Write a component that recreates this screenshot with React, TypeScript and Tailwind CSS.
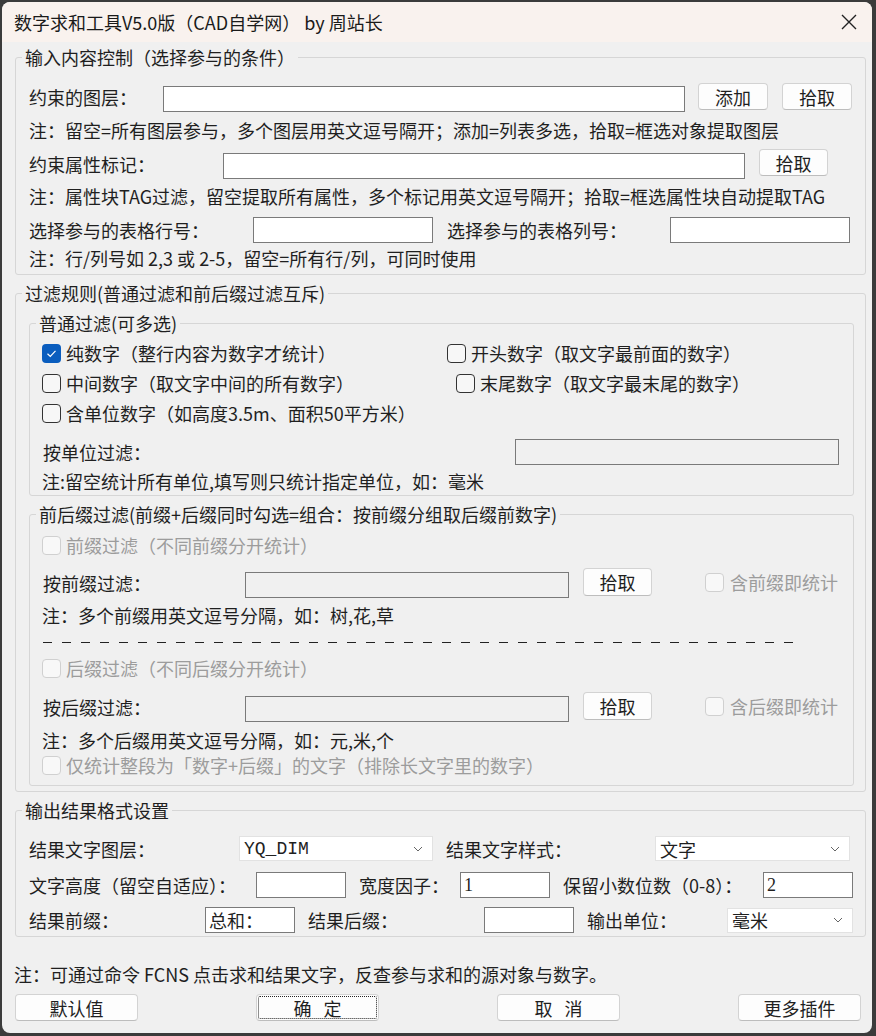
import type { ReactNode } from "react";

const dis = "text-[#9c9c9c]";

function Btn({ children, className = "" }: { children: ReactNode; className?: string }) {
  return (
    <div className={`flex h-[27px] items-center justify-center rounded-[4px] border border-[#d3d3d3] border-b-[#bdbdbd] bg-[#fdfdfd] text-[18px] leading-none text-[#1f1f1f] ${className}`}>
      {children}
    </div>
  );
}

function Box({ className = "", children }: { className?: string; children?: ReactNode }) {
  return <div className={`flex h-[26px] items-center border border-[#7a7a7a] pl-[3px] text-[18px] leading-none ${className}`}>{children}</div>;
}

function Combo({ className = "", children }: { className?: string; children?: ReactNode }) {
  return (
    <div className={`flex h-[25px] items-center justify-between border border-[#e2e2e2] bg-white pl-[4px] pr-[9px] text-[18px] leading-none ${className}`}>
      <span>{children}</span>
      <svg width="10" height="6" viewBox="0 0 10 6" fill="none">
        <path d="M1 1l4 4 4-4" stroke="#666" strokeWidth="1" />
      </svg>
    </div>
  );
}

function Cb({ checked = false, disabled = false }: { checked?: boolean; disabled?: boolean }) {
  if (checked)
    return (
      <div className="flex h-[19px] w-[19px] shrink-0 items-center justify-center rounded-[4px] bg-[#0a5dbe]">
        <svg width="19" height="19" viewBox="0 0 19 19" fill="none">
          <path d="M5.5 9.8l2.8 2.7 5.2-5.7" stroke="#fff" strokeWidth="1.2" />
        </svg>
      </div>
    );
  return (
    <div className={`h-[19px] w-[19px] shrink-0 rounded-[4px] border ${disabled ? "border-[#d0d0d0] bg-[#f8f8f8]" : "border-[#333] bg-[#f7f7f7]"}`} />
  );
}

// group box: border line runs through the legend, content padded inside
function Group({ title, className = "", inner = "", children }: { title: string; className?: string; inner?: string; children: ReactNode }) {
  return (
    <fieldset className={`rounded-[3px] border border-[#d6d6d6] ${className}`}>
      <legend className="ml-[6px] px-[3px] text-[18px] leading-[22px]">{title}</legend>
      <div className={inner}>{children}</div>
    </fieldset>
  );
}

function Dashes() {
  return (
    <div className="flex h-[22px] items-center gap-[10px]">
      {Array.from({ length: 40 }).map((_, i) => (
        <span key={i} className="h-px w-[9px] bg-[#222]" />
      ))}
    </div>
  );
}

export default function App() {
  return (
    <div className="h-[1036px] w-[876px] bg-[#3b3b3b] p-[2px] font-['Noto_Sans_CJK_SC',sans-serif] text-[#1f1f1f]">
      <div className="flex h-[1031px] w-[870px] flex-col overflow-hidden rounded-[8px] bg-[#f0f0f0]">
        {/* title bar */}
        <div className="flex h-[40px] shrink-0 items-center justify-between bg-[#f9f2ee] pl-[12px] pr-[14px]">
          <span className="text-[18px] leading-none text-[#1a1a1a]">数字求和工具V5.0版（CAD自学网） by 周站长</span>
          <svg width="18" height="18" viewBox="0 0 18 18" fill="none">
            <path d="M2 2l14 14M16 2L2 16" stroke="#222" strokeWidth="1.4" />
          </svg>
        </div>

        <div className="pl-[13px] text-[18px] leading-[22px]">
          {/* group 1 */}
          <Group title="输入内容控制（选择参与的条件）" className="mt-[4px] w-[851px] pb-[5px]" inner="pl-[13px]">
            <div className="mt-[15px] flex h-[28px] items-start">
              <span className="w-[134px] self-center">约束的图层：</span>
              <Box className="mt-[3px] h-[25px] w-[522px] bg-white" />
              <Btn className="ml-[13px] w-[70px]">添加</Btn>
              <Btn className="ml-[14px] w-[70px]">拾取</Btn>
            </div>
            <div className="mt-[8px]">注：留空=所有图层参与，多个图层用英文逗号隔开；添加=列表多选，拾取=框选对象提取图层</div>
            <div className="mt-[8px] flex h-[30px] items-start">
              <span className="w-[194px] self-center">约束属性标记：</span>
              <Box className="mt-[4px] w-[522px] bg-white" />
              <Btn className="ml-[14px] w-[69px]">拾取</Btn>
            </div>
            <div className="mt-[6px]">注：属性块TAG过滤，留空提取所有属性，多个标记用英文逗号隔开；拾取=框选属性块自动提取TAG</div>
            <div className="mt-[10px] flex h-[26px] items-center">
              <span className="w-[224px]">选择参与的表格行号：</span>
              <Box className="w-[180px] bg-white" />
              <span className="ml-[14px] w-[223px]">选择参与的表格列号：</span>
              <Box className="w-[180px] bg-white" />
            </div>
            <div className="mt-[4px]">注：行/列号如 2,3 或 2-5，留空=所有行/列，可同时使用</div>
          </Group>

          {/* group 2 */}
          <Group title="过滤规则(普通过滤和前后缀过滤互斥)" className="mt-[7px] w-[851px] pb-[5px]" inner="pl-[13px]">
            <Group title="普通过滤(可多选)" className="mt-[8px] w-[825px] pb-[3px]" inner="pl-[12px]">
              <div className="mt-[8px] flex h-[22px] items-center">
                <div className="flex w-[405px] items-center gap-[5px]">
                  <Cb checked />
                  <span>纯数字（整行内容为数字才统计）</span>
                </div>
                <div className="flex items-center gap-[5px]">
                  <Cb />
                  <span>开头数字（取文字最前面的数字）</span>
                </div>
              </div>
              <div className="mt-[8px] flex h-[22px] items-center">
                <div className="flex w-[414px] items-center gap-[5px]">
                  <Cb />
                  <span>中间数字（取文字中间的所有数字）</span>
                </div>
                <div className="flex items-center gap-[5px]">
                  <Cb />
                  <span>末尾数字（取文字最末尾的数字）</span>
                </div>
              </div>
              <div className="mt-[8px] flex h-[22px] items-center gap-[5px]">
                <Cb />
                <span>含单位数字（如高度3.5m、面积50平方米）</span>
              </div>
              <div className="mt-[15px] flex h-[26px] items-center">
                <span className="w-[473px] pl-px">按单位过滤：</span>
                <Box className="w-[324px] bg-[#f0f0f0]" />
              </div>
              <div className="mt-[5px]">注:留空统计所有单位,填写则只统计指定单位，如：毫米</div>
            </Group>

            <Group title="前后缀过滤(前缀+后缀同时勾选=组合：按前缀分组取后缀前数字)" className="mt-[7px] w-[825px] pb-[9px]" inner="pl-[12px]">
              <div className={`mt-[9px] flex h-[22px] items-center gap-[5px] ${dis}`}>
                <Cb disabled />
                <span>前缀过滤（不同前缀分开统计）</span>
              </div>
              <div className="mt-[12px] flex h-[30px] items-start">
                <span className="w-[203px] self-center pl-px">按前缀过滤：</span>
                <Box className="mt-[4px] w-[324px] bg-[#f0f0f0]" />
                <Btn className="ml-[14px] h-[28px] w-[69px]">拾取</Btn>
                <div className={`ml-[53px] mt-[3px] flex items-center gap-[6px] ${dis}`}>
                  <Cb disabled />
                  <span>含前缀即统计</span>
                </div>
              </div>
              <div className="mt-[6px]">注：多个前缀用英文逗号分隔，如：树,花,草</div>
              <div className="mt-[5px] pl-px">
                <Dashes />
              </div>
              <div className={`mt-[4px] flex h-[22px] items-center gap-[5px] ${dis}`}>
                <Cb disabled />
                <span>后缀过滤（不同后缀分开统计）</span>
              </div>
              <div className="mt-[13px] flex h-[30px] items-start">
                <span className="w-[203px] self-center pl-px">按后缀过滤：</span>
                <Box className="mt-[4px] w-[324px] bg-[#f0f0f0]" />
                <Btn className="ml-[14px] h-[28px] w-[69px]">拾取</Btn>
                <div className={`ml-[53px] mt-[3px] flex items-center gap-[6px] ${dis}`}>
                  <Cb disabled />
                  <span>含后缀即统计</span>
                </div>
              </div>
              <div className="mt-[7px]">注：多个后缀用英文逗号分隔，如：元,米,个</div>
              <div className={`mt-[3px] flex h-[22px] items-center gap-[5px] ${dis}`}>
                <Cb disabled />
                <span>仅统计整段为「数字+后缀」的文字（排除长文字里的数字）</span>
              </div>
            </Group>
          </Group>

          {/* group 3 */}
          <Group title="输出结果格式设置" className="mt-[7px] w-[851px] pb-[3px]" inner="pl-[13px]">
            <div className="mt-[15px] flex h-[25px] items-center">
              <span className="w-[210px]">结果文字图层：</span>
              <Combo className="w-[194px] font-['Liberation_Mono',monospace] text-[15px]">YQ_DIM</Combo>
              <span className="ml-[13px] w-[209px]">结果文字样式：</span>
              <Combo className="w-[195px]">文字</Combo>
            </div>
            <div className="mt-[11px] flex h-[26px] items-center">
              <span className="w-[227px]">文字高度（留空自适应）：</span>
              <Box className="w-[90px] bg-white" />
              <span className="ml-[13px] w-[101px]">宽度因子：</span>
              <Box className="w-[90px] bg-white font-['Liberation_Serif',serif]">1</Box>
              <span className="ml-[13px] w-[200px]">保留小数位数（0-8）：</span>
              <Box className="w-[90px] bg-white font-['Liberation_Serif',serif]">2</Box>
            </div>
            <div className="mt-[9px] flex h-[26px] items-center">
              <span className="w-[176px]">结果前缀：</span>
              <Box className="w-[90px] bg-white text-[17px]">总和：</Box>
              <span className="ml-[13px] w-[176px]">结果后缀：</span>
              <Box className="w-[90px] bg-white" />
              <span className="ml-[13px] w-[140px]">输出单位：</span>
              <Combo className="w-[126px]">毫米</Combo>
            </div>
          </Group>

          <div className="-ml-px mt-[26px]">注：可通过命令 FCNS 点击求和结果文字，反查参与求和的源对象与数字。</div>
          <div className="mt-[9px] flex gap-[118px]">
            <Btn className="w-[123px]">默认值</Btn>
            <Btn className="w-[123px] border-[#2f6fbf] outline-1 outline-offset-[-3px] outline-dotted outline-[#222]">确&nbsp;&nbsp;&nbsp;定</Btn>
            <Btn className="w-[123px]">取&nbsp;&nbsp;&nbsp;消</Btn>
            <Btn className="w-[123px]">更多插件</Btn>
          </div>
        </div>
      </div>
    </div>
  );
}
